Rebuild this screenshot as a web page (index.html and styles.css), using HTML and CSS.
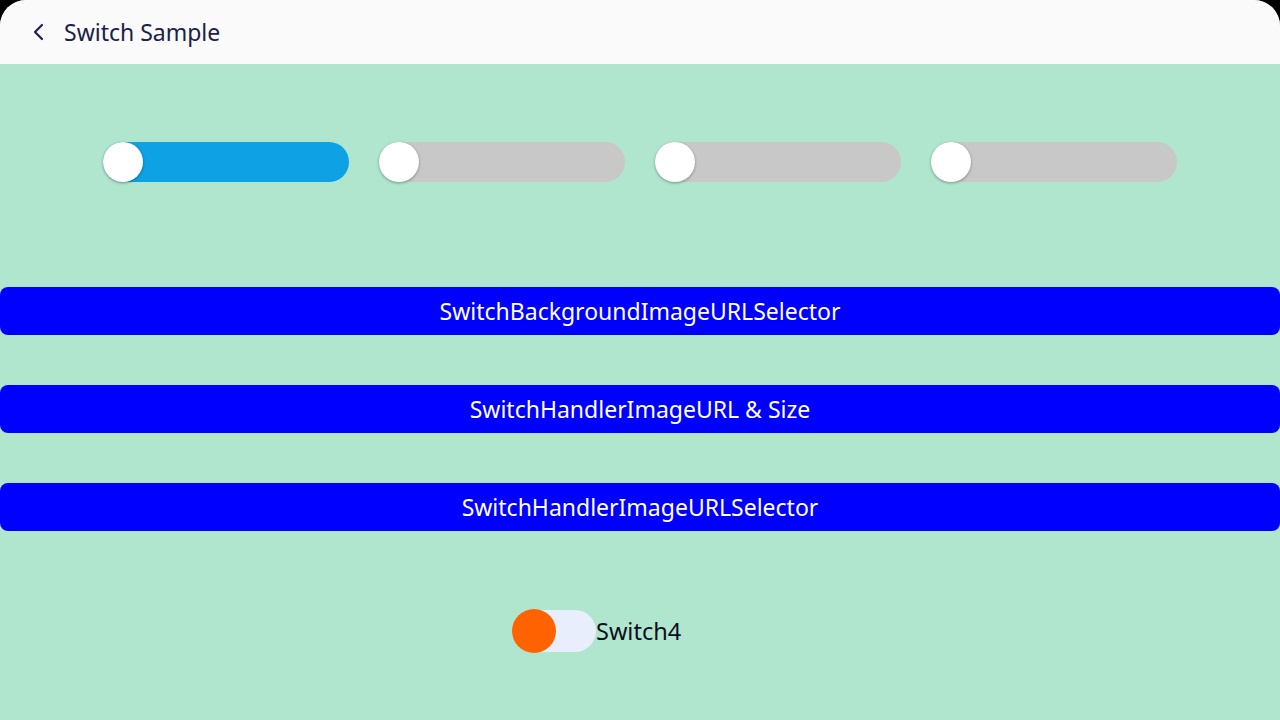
FILE: index.html
```html
<!DOCTYPE html>
<html>
<head>
<meta charset="utf-8">
<link rel="stylesheet" href="styles.css">
</head>
<body>
<div class="screen">
  <header class="appbar">
    <svg class="back" width="14" height="18" viewBox="0 0 14 18"><path d="M10 2 L3 9 L10 16" fill="none" stroke="#1b2149" stroke-width="2.2" stroke-linecap="round" stroke-linejoin="round"/></svg>
    <span class="title">Switch Sample</span>
  </header>
  <main class="content">
    <div class="switch-row">
      <div class="track on"><div class="knob"></div></div>
      <div class="track"><div class="knob"></div></div>
      <div class="track"><div class="knob"></div></div>
      <div class="track"><div class="knob"></div></div>
    </div>
    <div class="buttons">
      <div class="btn">SwitchBackgroundImageURLSelector</div>
      <div class="btn">SwitchHandlerImageURL &amp; Size</div>
      <div class="btn">SwitchHandlerImageURLSelector</div>
    </div>
    <div class="switch4">
      <div class="track4"><div class="knob4"></div></div>
      <span class="label4">Switch4</span>
    </div>
  </main>
</div>
</body>
</html>
```
FILE: styles.css
```css
html, body {
  margin: 0;
  padding: 0;
  background: #000;
}
body {
  font-family: "Noto Sans", "Open Sans", sans-serif;
}
.screen {
  width: 1280px;
  height: 720px;
  display: flex;
  flex-direction: column;
  background: #b0e6cd;
  border-radius: 26px 26px 0 0;
  overflow: hidden;
}
.appbar {
  height: 64px;
  flex: none;
  background: #fafafa;
  display: flex;
  align-items: center;
  padding-left: 32px;
  box-sizing: border-box;
}
.back {
  margin-right: 18px;
}
.title {
  font-size: 23px;
  color: #1b2149;
  line-height: 1;
}
.content {
  flex: 1;
  display: flex;
  flex-direction: column;
}
.switch-row {
  display: flex;
  justify-content: center;
  gap: 30px;
  margin-top: 78px;
}
.track {
  width: 246px;
  height: 40px;
  border-radius: 20px;
  background: #c8c8c8;
  display: flex;
}
.track.on {
  background: #0ea2e5;
}
.knob {
  width: 40px;
  height: 40px;
  border-radius: 50%;
  background: #ffffff;
  box-shadow: 0 1px 3px rgba(0,0,0,0.35);
}
.buttons {
  display: flex;
  flex-direction: column;
  gap: 50px;
  margin-top: 105px;
}
.btn {
  height: 48px;
  background: #0000ff;
  color: #ffffff;
  border-radius: 8px;
  display: flex;
  align-items: center;
  justify-content: center;
  font-size: 23px;
}
.switch4 {
  width: 256px;
  align-self: center;
  display: flex;
  align-items: center;
  margin-top: 79px;
}
.track4 {
  width: 84px;
  height: 42px;
  border-radius: 21px;
  background: #e8eefc;
  display: flex;
  align-items: center;
}
.knob4 {
  width: 44px;
  height: 44px;
  border-radius: 50%;
  background: #ff6200;
}
.label4 {
  font-size: 23.5px;
  color: #0a0e1e;
}
```
